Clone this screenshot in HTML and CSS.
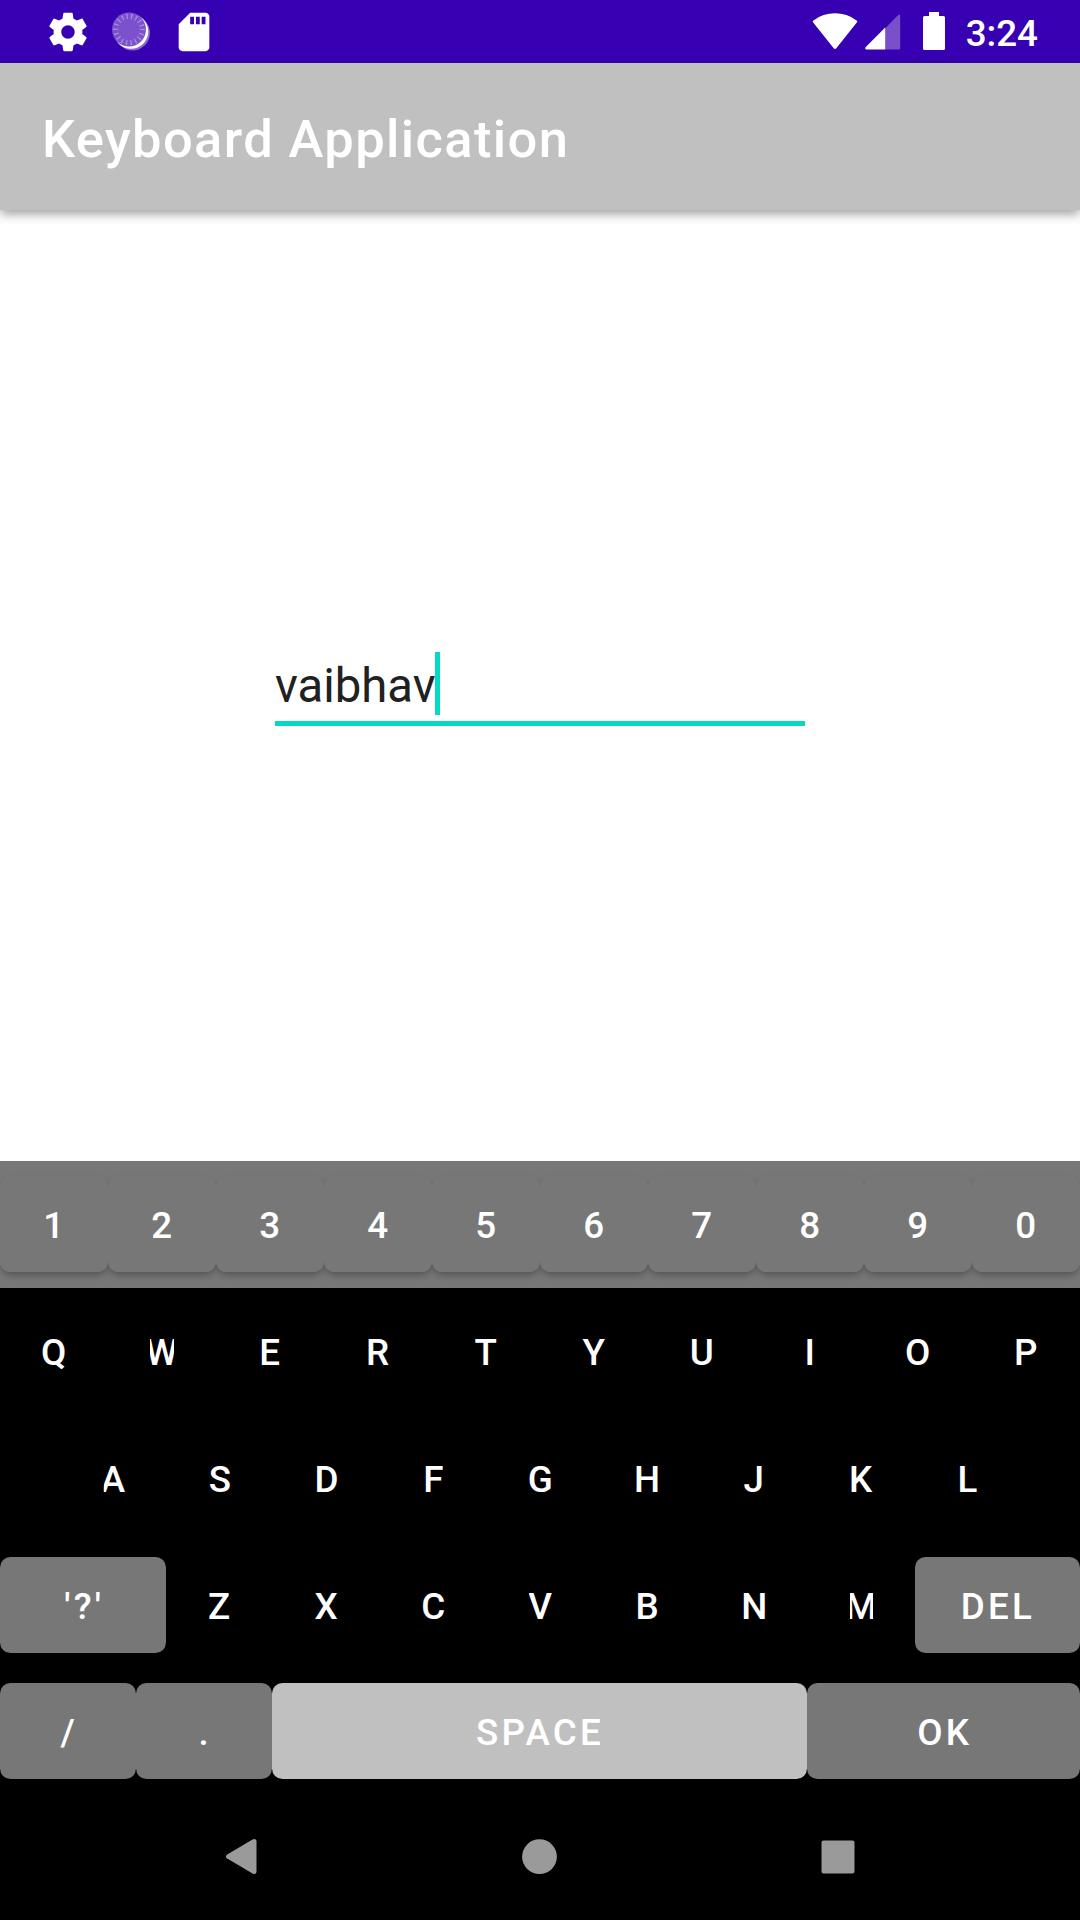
FILE: index.html
```html
<!DOCTYPE html>
<html lang="en">
<head>
<meta charset="utf-8">
<title>Keyboard Application</title>
<link rel="stylesheet" href="styles.css">
</head>
<body>
<div class="screen">
  <header class="status">
    <div class="status-left">
      <svg class="icon" viewBox="0 0 24 24"><path fill="#fff" d="M19.43 12.98c.04-.32.07-.64.07-.98s-.03-.66-.07-.98l2.11-1.65c.19-.15.24-.42.12-.64l-2-3.46c-.12-.22-.39-.3-.61-.22l-2.49 1c-.52-.4-1.08-.73-1.69-.98l-.38-2.65C14.46 2.18 14.25 2 14 2h-4c-.25 0-.46.18-.49.42l-.38 2.65c-.61.25-1.17.59-1.69.98l-2.49-1c-.23-.09-.49 0-.61.22l-2 3.460c-.13.22-.07.49.12.64l2.11 1.65c-.04.32-.07.65-.07.98s.03.66.07.98l-2.11 1.65c-.19.15-.24.42-.12.64l2 3.46c.12.22.39.3.61.22l2.49-1c.52.4 1.08.73 1.69.98l.38 2.65c.03.24.24.42.49.42h4c.25 0 .46-.18.49-.42l.38-2.65c.61-.25 1.17-.59 1.69-.98l2.49 1c.23.09.49 0 .61-.22l2-3.46c.12-.22.07-.49-.12-.64l-2.11-1.65zM12 15.500c-1.930 0-3.500-1.570-3.500-3.500s1.570-3.500 3.500-3.500 3.500 1.570 3.500 3.500-1.570 3.500-3.500 3.500z"/></svg>
      <svg class="icon" viewBox="0 0 46 46">
        <circle cx="24.500" cy="24" r="17.500" fill="#8a66d3"/>
        <circle cx="23" cy="22.500" r="17.300" fill="#fff"/>
        <circle cx="21" cy="20.500" r="17" fill="#7b52cc"/>
        <circle cx="21" cy="20.500" r="13.300" fill="none" stroke="#a88bdf" stroke-width="5.200" stroke-dasharray="1.300 3.343" transform="rotate(-2.800 21 20.500)"/>
      </svg>
      <svg class="icon" viewBox="0 0 24 24"><path fill="#fff" d="M18 2h-8L4.020 8 4 20c0 1.100.9 2 2 2h12c1.100 0 2-.9 2-2V4c0-1.100-.9-2-2-2zm-6 6h-2V4h2v4zm3 0h-2V4h2v4zm3 0h-2V4h2v4z"/></svg>
    </div>
    <div class="status-right">
      <svg class="wifi" viewBox="0 0 46 37"><path fill="#fff" d="M1.200 9.600Q0 8.400 1.400 7.400Q11 .3 23 .3T44.600 7.400Q46 8.400 44.800 9.600L24.300 35.300Q23 36.700 21.700 35.300Z"/></svg>
      <svg class="signal" viewBox="0 0 36 36"><path fill="#7a50ca" d="M20 14.500L33.300 1Q35.200-.4 35.200 2V34Q35.200 35.500 33.700 35.500H20Z"/><path fill="#fff" d="M20.200 13.500V35.500H1.500Q-.7 35.200.8 33Z"/></svg>
      <svg class="battery" viewBox="0 0 22 38"><path fill="#fff" d="M6 0H16V4H20.500Q22 4 22 5.500V36.500Q22 38 20.500 38H1.500Q0 38 0 36.500V5.500Q0 4 1.500 4H6Z"/></svg>
      <span class="clock">3:24</span>
    </div>
  </header>
  <div class="toolbar"><h1 class="title">Keyboard Application</h1></div>
  <main class="content">
    <div class="field"><span class="value">vaibhav</span><span class="caret"></span></div>
  </main>
  <section class="keyboard">
    <div class="row numbers">
      <div class="key gray"><span>1</span></div><div class="key gray"><span>2</span></div><div class="key gray"><span>3</span></div><div class="key gray"><span>4</span></div><div class="key gray"><span>5</span></div><div class="key gray"><span>6</span></div><div class="key gray"><span>7</span></div><div class="key gray"><span>8</span></div><div class="key gray"><span>9</span></div><div class="key gray"><span>0</span></div>
    </div>
    <div class="row">
      <div class="key"><span>Q</span></div><div class="key clip"><span>W</span></div><div class="key"><span>E</span></div><div class="key"><span>R</span></div><div class="key"><span>T</span></div><div class="key"><span>Y</span></div><div class="key"><span>U</span></div><div class="key"><span>I</span></div><div class="key"><span>O</span></div><div class="key"><span>P</span></div>
    </div>
    <div class="row middle">
      <div class="key key-a"><span>A</span></div><div class="key"><span>S</span></div><div class="key"><span>D</span></div><div class="key"><span>F</span></div><div class="key"><span>G</span></div><div class="key"><span>H</span></div><div class="key"><span>J</span></div><div class="key"><span>K</span></div><div class="key"><span>L</span></div>
    </div>
    <div class="row short">
      <div class="key gray symbols"><span>'?'</span></div><div class="key"><span>Z</span></div><div class="key"><span>X</span></div><div class="key"><span>C</span></div><div class="key clip"><span>V</span></div><div class="key"><span>B</span></div><div class="key"><span>N</span></div><div class="key clip"><span>M</span></div><div class="key gray delete"><span>DEL</span></div>
    </div>
    <div class="row short bottom">
      <div class="key gray"><span>/</span></div><div class="key gray"><span>.</span></div><div class="key light"><span>SPACE</span></div><div class="key gray"><span>OK</span></div>
    </div>
  </section>
  <nav class="nav">
    <svg class="nav-icon" viewBox="0 0 40 40"><path fill="#9a9a9a" d="M4.800 21.300Q3 19.500 4.800 17.700L30.500 2.500Q34 .9 34.500 4V35Q34 38.100 30.500 36.500Z"/></svg>
    <svg class="nav-icon" viewBox="0 0 40 40"><circle cx="19.500" cy="19.700" r="17.400" fill="#9a9a9a"/></svg>
    <svg class="nav-icon" viewBox="0 0 40 40"><rect x="3.500" y="3.500" width="33" height="33" rx="2" fill="#9a9a9a"/></svg>
  </nav>
</div>
</body>
</html>
```
FILE: styles.css
```css
* { box-sizing: border-box; }
body { margin: 0; background: #fff; font-family: Roboto, "Liberation Sans", sans-serif; }
.screen { width: 1080px; height: 1920px; display: flex; flex-direction: column; overflow: hidden; }
svg { display: block; flex: none; }

.status { height: 63px; flex: none; background: #3700b3; display: flex; justify-content: space-between; }
.status-left { display: flex; gap: 17px; padding: 8.5px 0 0 45px; }
.icon { width: 46px; height: 46px; }
.status-right { display: flex; padding: 12px 42px 0 0; }
.wifi { width: 46px; height: 37px; margin: 1px 7px 0 0; }
.signal { width: 36px; height: 36px; margin: 2px 22px 0 0; }
.battery { width: 22px; height: 38px; margin-right: 21px; }
.clock { color: #fff; font-size: 36.75px; font-weight: 500; line-height: 43px; }

.toolbar { height: 147px; flex: none; background: #c0c0c0; padding: 4px 0 0 42px; display: flex; align-items: center; box-shadow: 0 4px 10px rgba(0,0,0,.38); }
.title { margin: 0; color: #fff; font-size: 52.5px; font-weight: 500; line-height: 62px; letter-spacing: .026em; white-space: nowrap; }

.content { flex: 1; padding: 442px 275px 0; }
.field { height: 74px; display: flex; align-items: flex-start; border-bottom: 5px solid #03dac5; }
.value { color: #212121; font-size: 47.25px; line-height: 69px; }
.caret { width: 5px; height: 63px; margin-left: -1px; background: #03dac5; }

.keyboard { height: 633px; flex: none; background: #000; }
.row { height: 127px; padding-top: 15px; display: flex; align-items: flex-start; isolation: isolate; }
.short { height: 126px; }
.numbers { background: #777; }
.middle { padding-left: 59px; padding-right: 59px; }
.key { position: relative; flex: 1 1 0; min-width: 0; height: 96px; padding: 4px 42px 0; display: flex; justify-content: center; align-items: center; border-radius: 10.5px; color: #fff; font-size: 36.75px; font-weight: 500; line-height: 44px; letter-spacing: .08929em; }
.key span { text-indent: 2.6px; white-space: nowrap; }
.clip span { display: flex; flex: 1 1 0; min-width: 0; justify-content: center; overflow: hidden; }
.key-a { padding-left: 43px; }
.key-a span { clip-path: inset(0 0 0 5.5px); }
.gray { background: #777; }
/* key shadows sit on a layer below the neighbouring keys */
.numbers .key::before { content: ""; position: absolute; inset: 0; z-index: -1; border-radius: 10.5px; box-shadow: 0 4px 7px -1px rgba(0,0,0,.3); }
.light { background: #c0c0c0; }
.symbols { flex: 0 0 166px; }
.delete { flex: 0 0 165px; }
.delete span, .light span { text-indent: 1px; }
.bottom { display: grid; grid-template-columns: 136px 136px 535px 273px; }

.nav { height: 126px; flex: none; background: #000; display: flex; justify-content: space-between; padding: 43px 222px; }
.nav-icon { width: 40px; height: 40px; }
```
